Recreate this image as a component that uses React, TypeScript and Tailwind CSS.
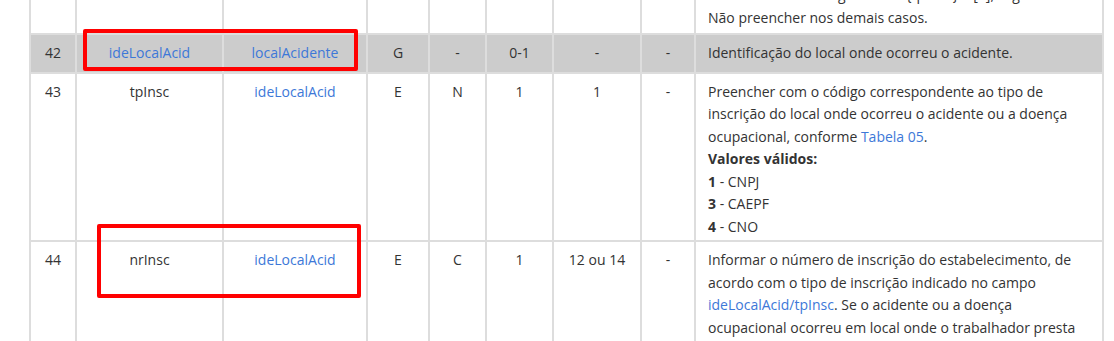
import React from 'react';

const font = { fontFamily: '"Open Sans", "Noto Sans", sans-serif' };

function Link({ children }: { children: React.ReactNode }) {
  return <span className="text-[#3d78d8]">{children}</span>;
}

export default function App() {
  const td = 'border-2 border-[#dddddd] px-2 py-[7px] text-center align-top';
  const desc = 'border-2 border-[#dddddd] pl-3 pr-3 pt-[7px] text-left align-top';

  return (
    <div className="relative h-[341px] w-[1114px] overflow-hidden bg-white text-[14px] leading-[22.5px] text-[#333333]" style={font}>
      <table className="ml-[29px] mt-[-25px] w-[1075px] table-fixed border-collapse">
        <colgroup>
          <col className="w-[46px]" />
          <col className="w-[147px]" />
          <col className="w-[144px]" />
          <col className="w-[62px]" />
          <col className="w-[57px]" />
          <col className="w-[67px]" />
          <col className="w-[88px]" />
          <col className="w-[54px]" />
          <col className="w-[408px]" />
        </colgroup>
        <tbody>
          {/* row 41, only its tail shows */}
          <tr>
            <td className={td}></td>
            <td className={td}></td>
            <td className={td}></td>
            <td className={td}></td>
            <td className={td}></td>
            <td className={td}></td>
            <td className={td}></td>
            <td className={td}></td>
            <td className={desc + ' pb-1'}>
              <div className="whitespace-nowrap">
                Preenchimento obrigatório se {'{'}tpAcid{'}'} = [2], segundo a <Link>Tabela 24 {'{'}tpAcid{'}'}</Link>.
              </div>
              <div>Não preencher nos demais casos.</div>
            </td>
          </tr>

          {/* 42 */}
          <tr className="bg-[#cccccc]">
            <td className={td}>42</td>
            <td className={td}><Link>ideLocalAcid</Link></td>
            <td className={td}><Link>localAcidente</Link></td>
            <td className={td}>G</td>
            <td className={td}>-</td>
            <td className={td}>0-1</td>
            <td className={td}>-</td>
            <td className={td}>-</td>
            <td className={desc + ' pb-[7px]'}>Identificação do local onde ocorreu o acidente.</td>
          </tr>

          {/* 43 */}
          <tr>
            <td className={td}>43</td>
            <td className={td}>tpInsc</td>
            <td className={td}><Link>ideLocalAcid</Link></td>
            <td className={td}>E</td>
            <td className={td}>N</td>
            <td className={td}>1</td>
            <td className={td}>1</td>
            <td className={td}>-</td>
            <td className={desc + ' pb-[2px]'}>
              Preencher com o código correspondente ao tipo de
              <br />
              inscrição do local onde ocorreu o acidente ou a doença
              <br />
              ocupacional, conforme <Link>Tabela 05</Link>.
              <div className="font-bold">Valores válidos:</div>
              <div><b>1</b> - CNPJ</div>
              <div><b>3</b> - CAEPF</div>
              <div><b>4</b> - CNO</div>
            </td>
          </tr>

          {/* 44 */}
          <tr>
            <td className={td}>44</td>
            <td className={td}>nrInsc</td>
            <td className={td}><Link>ideLocalAcid</Link></td>
            <td className={td}>E</td>
            <td className={td}>C</td>
            <td className={td}>1</td>
            <td className={td}>12 ou 14</td>
            <td className={td}>-</td>
            <td className={desc + ' pb-1'}>
              Informar o número de inscrição do estabelecimento, de
              <br />
              acordo com o tipo de inscrição indicado no campo
              <br />
              <Link>ideLocalAcid/tpInsc</Link>. Se o acidente ou a doença
              <br />
              ocupacional ocorreu em local onde o trabalhador presta
              <br />
              serviços, deve ser um estabelecimento do empregador.
            </td>
          </tr>
        </tbody>
      </table>

      {/* red highlight boxes */}
      <div className="absolute left-[83px] top-[29px] h-[42px] w-[275px] rounded-[2px] border-4 border-[#ff0000]" />
      <div className="absolute left-[97px] top-[224px] h-[74px] w-[264px] rounded-[2px] border-4 border-[#ff0000]" />
    </div>
  );
}
